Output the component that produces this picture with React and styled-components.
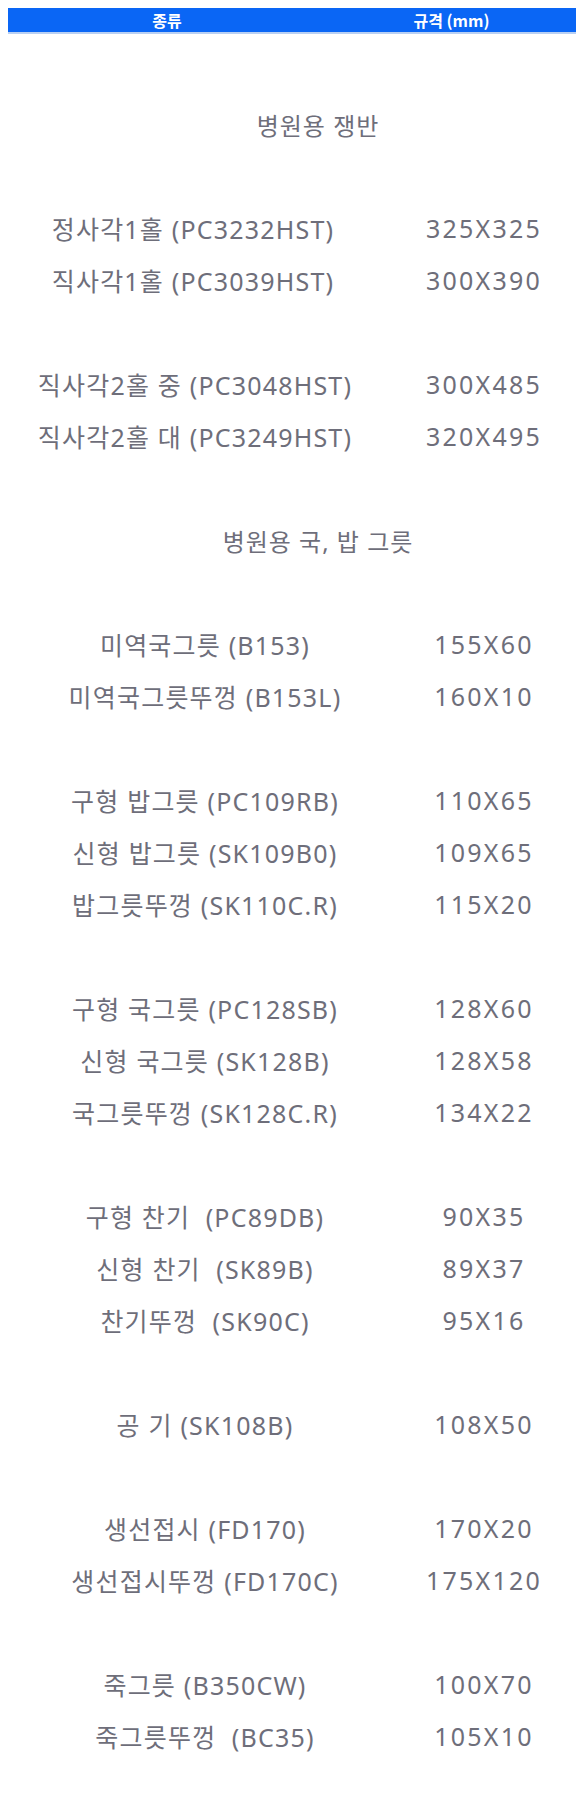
import React from "react";
import styled, { createGlobalStyle } from "styled-components";

const GlobalStyle = createGlobalStyle`
  body {
    margin: 8px;
    background: #ffffff;
    font-family: "Noto Sans", "Noto Sans CJK KR", sans-serif;
  }
`;

const Page = styled.div`
  width: 569px;
`;

const Header = styled.div`
  display: grid;
  grid-template-columns: 318px 1fr;
  height: 24px;
  align-items: center;
  background-color: #0a66f5;
  border-bottom: 2px solid #b9d0f3;
`;

const HeadCell = styled.div`
  text-align: center;
  color: #ffffff;
  font-family: "Noto Sans CJK KR", sans-serif;
  font-size: 16px;
  font-weight: 700;
  line-height: 24px;
`;

const Table = styled.div`
  display: flex;
  flex-direction: column;
  gap: 52px;
  margin-top: 64px;
`;

const Title = styled.div`
  height: 52px;
  display: flex;
  align-items: center;
  justify-content: center;
  padding-left: 51px;
  color: #6e6e7a;
  font-size: 24px;
  letter-spacing: 1px;
`;

const Group = styled.div`
  display: flex;
  flex-direction: column;
`;

const Row = styled.div`
  display: grid;
  grid-template-columns: ${props => props.$left}px 1fr 164px;
  height: 52px;
  align-items: center;
  padding-right: 11px;
  color: #6e6e7a;
  font-size: 25px;
  white-space: pre;
`;

const Name = styled.div`
  text-align: center;
  letter-spacing: 1.2px;
`;

const Size = styled.div`
  grid-column: 3;
  text-align: center;
  letter-spacing: 2.2px;
`;

const blocks = [
  { title: "병원용 쟁반" },
  {
    left: 370,
    rows: [
      ["정사각1홀 (PC3232HST)", "325X325"],
      ["직사각1홀 (PC3039HST)", "300X390"],
    ],
  },
  {
    left: 374,
    rows: [
      ["직사각2홀 중 (PC3048HST)", "300X485"],
      ["직사각2홀 대 (PC3249HST)", "320X495"],
    ],
  },
  { title: "병원용 국, 밥 그릇" },
  {
    left: 394,
    rows: [
      ["미역국그릇 (B153)", "155X60"],
      ["미역국그릇뚜껑 (B153L)", "160X10"],
    ],
  },
  {
    left: 394,
    rows: [
      ["구형 밥그릇 (PC109RB)", "110X65"],
      ["신형 밥그릇 (SK109B0)", "109X65"],
      ["밥그릇뚜껑 (SK110C.R)", "115X20"],
    ],
  },
  {
    left: 394,
    rows: [
      ["구형 국그릇 (PC128SB)", "128X60"],
      ["신형 국그릇 (SK128B)", "128X58"],
      ["국그릇뚜껑 (SK128C.R)", "134X22"],
    ],
  },
  {
    left: 394,
    rows: [
      ["구형 찬기  (PC89DB)", "90X35"],
      ["신형 찬기  (SK89B)", "89X37"],
      ["찬기뚜껑  (SK90C)", "95X16"],
    ],
  },
  {
    left: 394,
    rows: [["공 기 (SK108B)", "108X50"]],
  },
  {
    left: 394,
    rows: [
      ["생선접시 (FD170)", "170X20"],
      ["생선접시뚜껑 (FD170C)", "175X120"],
    ],
  },
  {
    left: 394,
    rows: [
      ["죽그릇 (B350CW)", "100X70"],
      ["죽그릇뚜껑  (BC35)", "105X10"],
    ],
  },
];

const App = () => (
  <Page>
    <GlobalStyle />
    <Header>
      <HeadCell>종류</HeadCell>
      <HeadCell>규격 (mm)</HeadCell>
    </Header>
    <Table>
      {blocks.map((block, i) =>
        block.title ? (
          <Title key={i}>{block.title}</Title>
        ) : (
          <Group key={i}>
            {block.rows.map(([name, size]) => (
              <Row key={name} $left={block.left}>
                <Name>{name}</Name>
                <Size>{size}</Size>
              </Row>
            ))}
          </Group>
        )
      )}
    </Table>
  </Page>
);

export default App;
